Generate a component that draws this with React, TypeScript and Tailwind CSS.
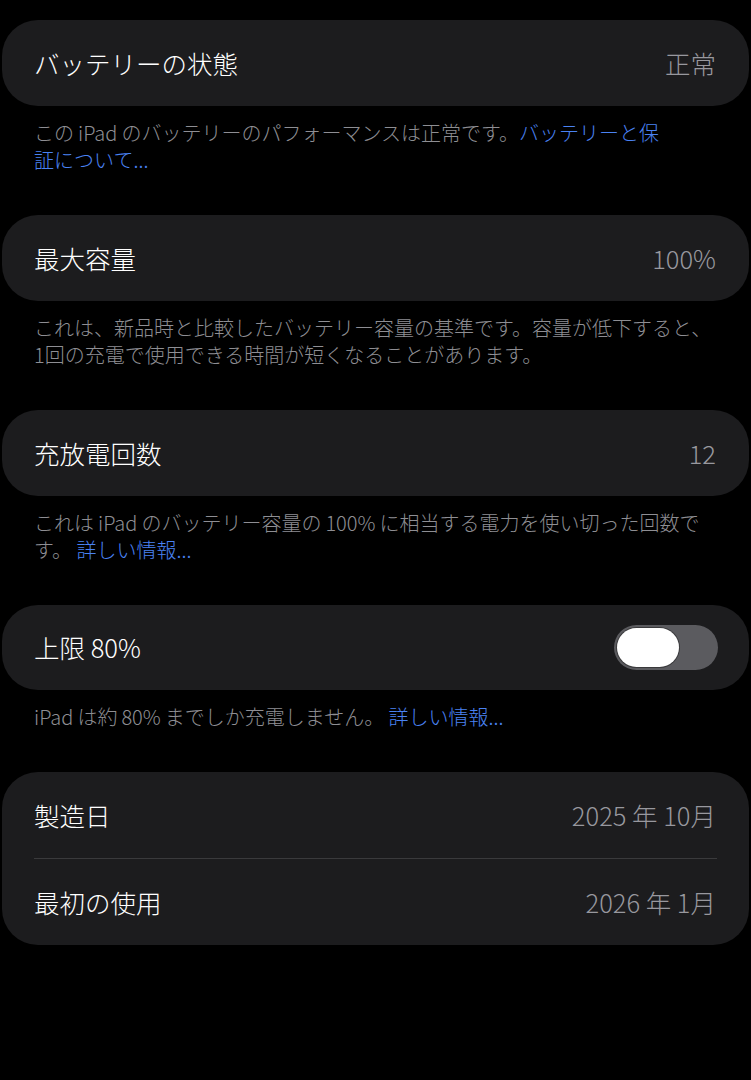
import React from "react";

const FONT = { fontFamily: '"Noto Sans CJK JP", "Noto Sans", sans-serif' };

function Row({ label, value }: { label: string; value: React.ReactNode }) {
  return (
    <div className="flex h-[86px] items-center justify-between pl-[32px] pr-[33px]">
      <span className="text-[25.5px] font-light text-white">{label}</span>
      <span className="text-[25.5px] font-light text-[#98989e]">{value}</span>
    </div>
  );
}

function Card({ children }: { children: React.ReactNode }) {
  return <div className="rounded-[36px] bg-[#1c1c1e]">{children}</div>;
}

function Footer({ children }: { children: React.ReactNode }) {
  return (
    <p className="mb-[42px] mt-[13px] pl-[32px] pr-[20px] text-[20px] font-light leading-[27px] text-[#8e8e93]">
      {children}
    </p>
  );
}

function Link({ children }: { children: React.ReactNode }) {
  return <span className="text-[#4a82f2]">{children}</span>;
}

function Toggle() {
  return (
    <div className="flex h-[45px] w-[104px] items-center rounded-full bg-[#5b5b5f] px-[3px]">
      <div className="h-[39px] w-[62px] rounded-full bg-white ring-1 ring-[#3a3a3c]" />
    </div>
  );
}

export default function App() {
  return (
    <div className="min-h-[1080px] w-[751px] bg-black px-[2px] pt-[20px]" style={FONT}>
      <Card>
        <Row label="バッテリーの状態" value="正常" />
      </Card>
      <Footer>
        この{"\u2009"}iPad{"\u2009"}のバッテリーのパフォーマンスは正常です。<Link>バッテリーと保<br />証について...</Link>
      </Footer>

      <Card>
        <Row label="最大容量" value="100%" />
      </Card>
      <Footer>
        これは、新品時と比較したバッテリー容量の基準です。容量が低下すると、
        <br />
        1回の充電で使用できる時間が短くなることがあります。
      </Footer>

      <Card>
        <Row label="充放電回数" value="12" />
      </Card>
      <Footer>
        これは{"\u2009"}iPad{"\u2009"}のバッテリー容量の{"\u2009"}100%{"\u2009"}に相当する電力を使い切った回数で
        <br />
        す。 <Link>詳しい情報...</Link>
      </Footer>

      <Card>
        <div className="flex h-[85px] items-center justify-between pl-[32px] pr-[31px]">
          <span className="text-[25.5px] font-light text-white">上限 80%</span>
          <Toggle />
        </div>
      </Card>
      <Footer>
        iPad{"\u2009"}は約{"\u2009"}80%{"\u2009"}までしか充電しません。 <Link>詳しい情報...</Link>
      </Footer>

      <Card>
        <Row label="製造日" value="2025 年 10月" />
        <div className="ml-[32px] mr-[32px] h-px bg-[#3a3a3c]" />
        <Row label="最初の使用" value="2026 年 1月" />
      </Card>
    </div>
  );
}
